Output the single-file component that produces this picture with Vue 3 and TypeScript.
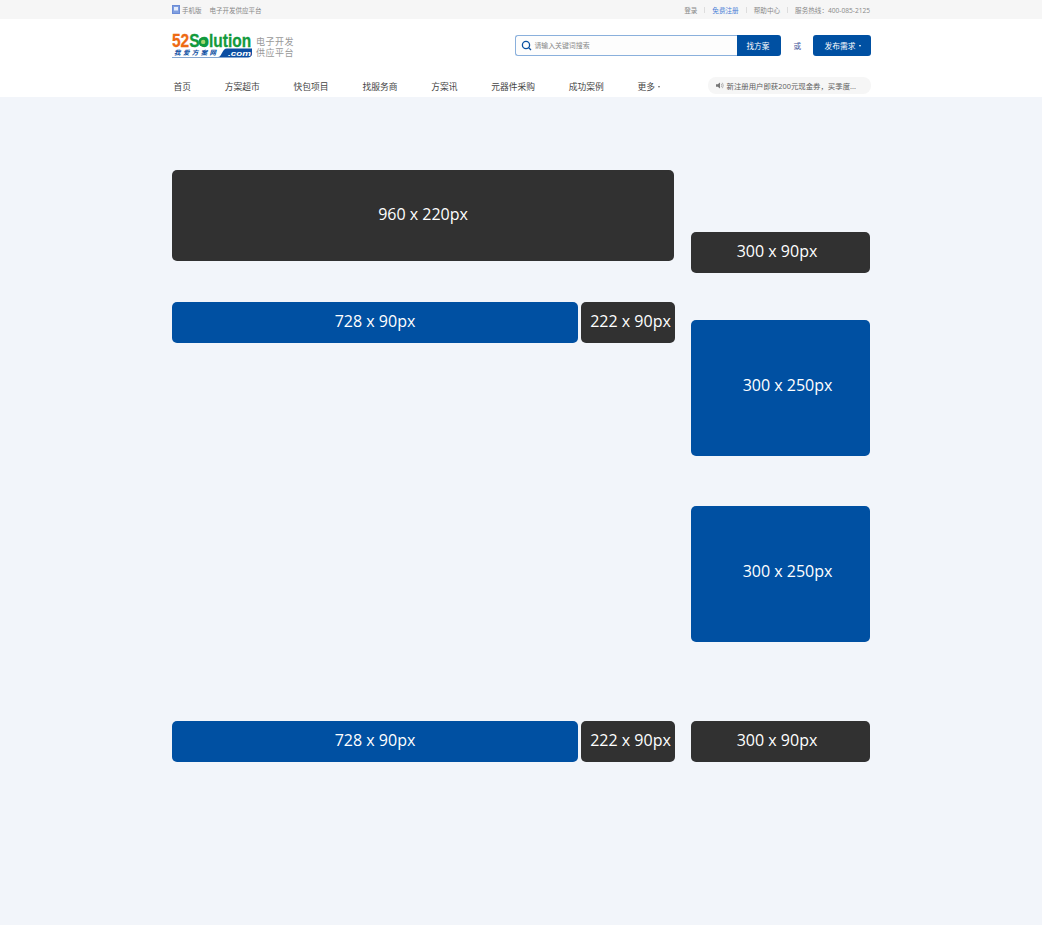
<script setup lang="ts">
const navItems: string[] = ['首页', '方案超市', '快包项目', '找服务商', '方案讯', '元器件采购', '成功案例']
</script>

<template>
  <div class="page">
    <div class="topbar">
      <div class="wrap topbar-inner">
        <div class="top-left">
          <svg class="phone" width="8" height="9" viewBox="0 0 8 9">
            <rect x="0.5" y="0.5" width="7" height="8" fill="#7f9fe0" stroke="#6c8cd6" stroke-width="1" />
            <rect x="2" y="2" width="4" height="3.5" fill="#e6edfb" />
          </svg>
          <span class="mobile">手机版</span>
          <span class="slogan">电子开发供应平台</span>
        </div>
        <div class="top-right">
          <span>登录</span><i class="sep"></i>
          <span class="reg">免费注册</span><i class="sep"></i>
          <span>帮助中心</span><i class="sep"></i>
          <span>服务热线：400-085-2125</span>
        </div>
      </div>
    </div>

    <header class="header">
      <div class="wrap brand-row">
        <div class="brand">
          <svg class="logo" width="81" height="30" viewBox="0 -3 81 30">
            <text y="15" transform="scale(0.815 1)" font-family="Liberation Sans" font-weight="700" font-size="19" stroke-width="0.3"><tspan fill="#ee6a12" stroke="#ee6a12">52</tspan><tspan fill="#129a3c" stroke="#129a3c">Solution</tspan></text>
            <circle cx="31.2" cy="9.9" r="4.7" fill="#129a3c" />
            <circle cx="31.2" cy="9.9" r="2.2" fill="#a6d66e" />
            <path d="M0 25 H46 C50 25 50 16.500 55 16.500 H80 V22 C80 24 78 25.500 76 25.500 H0 Z" fill="#0b4ea2" />
            <path d="M0 16.500 H47 C49 16.500 48 24 44 24 H0 Z" fill="#fff" />
            <text x="2" y="23.300" font-family="Noto Sans CJK SC" font-weight="700" font-style="italic" font-size="6.500" fill="#0b4ea2" textLength="42">我爱方案网</text>
            <text x="56" y="24.300" font-family="Liberation Sans" font-weight="700" font-style="italic" font-size="8" fill="#ffffff" textLength="23" lengthAdjust="spacingAndGlyphs">.com</text>
          </svg>
          <div class="tagline"><span>电子开发</span><span>供应平台</span></div>
        </div>
        <div class="actions">
          <div class="search">
            <div class="search-input">
              <svg width="11" height="11" viewBox="0 0 11 11" fill="none" stroke="#0a50a0" stroke-width="1.300">
                <circle cx="5" cy="5" r="3.600" />
                <path d="M7.600 7.600 L10 10" />
              </svg>
              <span class="placeholder">请输入关键词搜索</span>
            </div>
            <div class="search-btn">找方案</div>
          </div>
          <span class="or">或</span>
          <div class="publish">发布需求<i class="caret white"></i></div>
        </div>
      </div>
      <div class="wrap nav-row">
        <nav class="nav">
          <span v-for="item in navItems" :key="item">{{ item }}</span>
          <span class="more">更多<i class="caret"></i></span>
        </nav>
        <div class="notice">
          <svg width="8" height="7" viewBox="0 0 8 7">
            <path d="M0 2.200 H1.800 L4 0.400 V6.600 L1.800 4.800 H0 Z" fill="#777" />
            <path d="M5.200 1.800 Q6.400 3.500 5.200 5.200 M6.400 0.800 Q8.200 3.500 6.400 6.200" fill="none" stroke="#999" stroke-width="0.700" />
          </svg>
          <span>新注册用户即获200元现金券，买季度...</span>
        </div>
      </div>
    </header>

    <main class="main">
      <div class="wrap columns">
        <div class="left">
          <div class="ad dark banner"><span class="up">960 x 220px</span></div>
          <div class="ad-row first">
            <div class="ad blue leader"><span class="up">728 x 90px</span></div>
            <div class="ad dark small"><span class="up nudge">222 x 90px</span></div>
          </div>
          <div class="ad-row second">
            <div class="ad blue leader"><span class="up">728 x 90px</span></div>
            <div class="ad dark small"><span class="up nudge">222 x 90px</span></div>
          </div>
        </div>
        <div class="right">
          <div class="ad dark side-s s1"><span class="up back">300 x 90px</span></div>
          <div class="ad blue side-l s2"><span class="up fwd">300 x 250px</span></div>
          <div class="ad blue side-l s3"><span class="up fwd">300 x 250px</span></div>
          <div class="ad dark side-s s4"><span class="up back">300 x 90px</span></div>
        </div>
      </div>
    </main>
  </div>
</template>

<style>
html, body {
  margin: 0;
  background: #fff;
}
</style>

<style scoped>
.page {
  width: 1042px;
  height: 925px;
  display: flex;
  flex-direction: column;
  background: #f2f5fa;
  font-family: "Noto Sans CJK SC", "Open Sans", sans-serif;
  overflow: hidden;
}
.wrap {
  width: 698px;
  margin: 0 auto;
}
.topbar {
  height: 19px;
  background: #f6f6f6;
  font-family: "Open Sans", "Noto Sans CJK SC", sans-serif;
  font-size: 6.5px;
  color: #888;
}
.topbar-inner {
  height: 100%;
  display: flex;
  align-items: center;
  justify-content: space-between;
}
.top-left,
.top-right {
  display: flex;
  align-items: center;
}
.top-right {
  font-size: 6.6px;
}
.phone {
  margin-right: 2px;
}
.mobile {
  margin-right: 8px;
}
.sep {
  width: 1px;
  height: 6px;
  margin: 0 7px;
  background: #ddd;
}
.reg {
  color: #4a7fd6;
}
.header {
  height: 78px;
  background: #fff;
  box-sizing: border-box;
  padding-top: 10px;
}
.brand-row {
  height: 33px;
  display: flex;
  justify-content: space-between;
  align-items: flex-start;
}
.brand {
  display: flex;
  align-items: flex-start;
}
.logo {
  display: block;
}
.tagline {
  display: flex;
  flex-direction: column;
  margin: 7px 0 0 3px;
  font-size: 9px;
  line-height: 11px;
  letter-spacing: 0.5px;
  color: #999;
}
.actions {
  display: flex;
  align-items: center;
  margin: 6px -1px 0 0;
}
.search {
  display: flex;
  width: 266px;
  height: 21px;
}
.search-input {
  width: 222px;
  box-sizing: border-box;
  display: flex;
  align-items: center;
  gap: 2px;
  padding-left: 5px;
  border: 1.5px solid #8ab0dc;
  border-right: none;
  border-radius: 3px 0 0 3px;
  background: #fdfdfd;
}
.placeholder {
  font-size: 6.9px;
  line-height: 9px;
  margin-bottom: 1px;
  color: #888;
}
.search-btn {
  flex: 1;
  display: flex;
  align-items: center;
  justify-content: center;
  padding: 0 3px 1px 0;
  background: #0050a2;
  color: #fff;
  font-size: 7.6px;
  border-radius: 0 3px 3px 0;
}
.or {
  margin: 0 12px;
  font-size: 7.6px;
  color: #44559a;
}
.publish {
  width: 58px;
  height: 21px;
  display: flex;
  align-items: center;
  justify-content: center;
  padding-left: 1px;
  box-sizing: border-box;
  background: #0050a2;
  color: #fff;
  font-size: 7.75px;
  border-radius: 3px;
}
.caret {
  display: inline-block;
  margin-left: 3px;
  border-left: 1.5px solid transparent;
  border-right: 1.5px solid transparent;
  border-top: 2px solid #666;
}
.caret.white {
  border-top-color: #fff;
}
.nav-row {
  display: flex;
  justify-content: space-between;
  align-items: center;
  height: 17px;
  margin-top: 15px;
}
.nav {
  display: flex;
  gap: 33.8px;
  padding-left: 1.5px;
  font-size: 8.75px;
  color: #444;
  position: relative;
  top: 1px;
}
.more {
  display: flex;
  align-items: center;
}
.notice {
  width: 163px;
  height: 17px;
  box-sizing: border-box;
  margin-right: -1px;
  padding-left: 8px;
  display: flex;
  align-items: center;
  gap: 2.5px;
  background: #f6f6f6;
  border-radius: 8px;
  font-family: "Open Sans", "Noto Sans CJK SC", sans-serif;
  font-size: 7.4px;
  color: #5c5c5c;
  white-space: nowrap;
}
.main {
  flex: 1;
  padding-top: 73px;
}
.columns {
  display: flex;
  justify-content: space-between;
  align-items: flex-start;
}
.left {
  width: 503px;
  display: flex;
  flex-direction: column;
}
.right {
  width: 179px;
  display: flex;
  flex-direction: column;
}
.ad {
  display: flex;
  align-items: center;
  justify-content: center;
  border-radius: 5px;
  color: #fff;
  font-family: "Open Sans", "Noto Sans", sans-serif;
  font-size: 16px;
  white-space: nowrap;
}
.dark {
  background: #313131;
}
.blue {
  background: #0050a2;
}
.banner {
  width: 502px;
  height: 91px;
}
.ad-row {
  display: flex;
  gap: 3px;
  height: 41px;
}
.ad-row.first {
  margin-top: 41px;
}
.ad-row.second {
  margin-top: 378px;
}
.leader {
  width: 406px;
}
.small {
  width: 94px;
}
.side-s {
  height: 41px;
}
.side-l {
  height: 136px;
}
.s1 {
  margin-top: 62px;
}
.s2 {
  margin-top: 47px;
}
.s3 {
  margin-top: 50px;
}
.s4 {
  margin-top: 79px;
}
.up {
  margin-bottom: 4px;
}
.nudge {
  margin-left: 5px;
}
.back {
  margin-right: 7px;
}
.fwd {
  margin-left: 14px;
  margin-bottom: 7px;
}
</style>
